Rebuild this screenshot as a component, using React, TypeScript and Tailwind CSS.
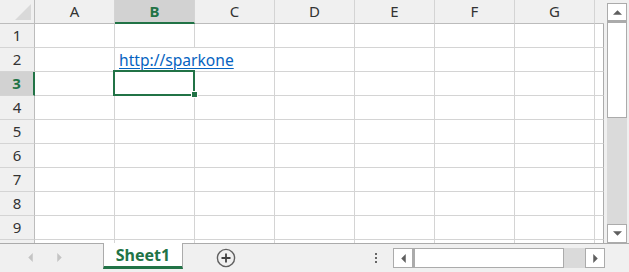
import React from "react"

const cols = ["A", "B", "C", "D", "E", "F", "G"]
const rows = [1, 2, 3, 4, 5, 6, 7, 8, 9]

const green = "#217346"

const Tri = ({ dir, color = "#5f5f5f" }: { dir: "up" | "down" | "left" | "right"; color?: string }) => {
  const pts = {
    up: "0,4 4,0 8,4",
    down: "0,0 8,0 4,4",
    left: "4,0 4,8 0,4",
    right: "0,0 0,8 4,4",
  }[dir]
  const horiz = dir === "left" || dir === "right"
  return (
    <svg width={horiz ? 5 : 9} height={horiz ? 9 : 5} viewBox={horiz ? "0 0 4 8" : "0 0 8 4"} className="block">
      <polygon points={pts} fill={color} />
    </svg>
  )
}

export default function App() {
  return (
    <div className="w-[629px] h-[272px] bg-[#f0f0f0] flex flex-col overflow-hidden font-['Noto_Sans',sans-serif] text-[#333]">
      <div className="flex h-[243px]">
        {/* sheet grid */}
        <div className="relative w-[607px] flex flex-col">
          <div className="flex h-[24px] shrink-0">
            <div className="w-[35px] h-[24px] border-r border-b border-[#bcbcbc]">
              <svg width="34" height="23" className="block">
                <polygon points="31,4 31,20 15,20" fill="#d9d9d9" />
              </svg>
            </div>
            {cols.map((c) =>
              c === "B" ? (
                <div
                  key={c}
                  className="w-[80px] h-[24px] border-r border-r-[#d4d4d4] border-b-2 border-b-[#217346] bg-[#d2d2d2] flex items-center justify-center text-[15px] font-bold text-[#217346]"
                >
                  {c}
                </div>
              ) : (
                <div
                  key={c}
                  className="w-[80px] h-[24px] border-r border-r-[#d4d4d4] border-b border-b-[#bcbcbc] flex items-center justify-center text-[15px]"
                >
                  {c}
                </div>
              )
            )}
            <div className="w-[9px] h-[24px] border-b border-[#bcbcbc]" />
          </div>

          {rows.map((r) => (
            <div key={r} className="flex h-[24px] shrink-0">
              {r === 3 ? (
                <div className="w-[35px] h-[24px] border-r-2 border-r-[#217346] border-b border-b-[#d4d4d4] bg-[#d2d2d2] flex items-center justify-center text-[15px] font-bold text-[#217346]">
                  {r}
                </div>
              ) : (
                <div className="w-[35px] h-[24px] border-r border-r-[#bcbcbc] border-b border-b-[#d4d4d4] flex items-center justify-center text-[15px]">
                  {r}
                </div>
              )}
              {cols.map((c) =>
                r === 2 && c === "B" ? (
                  <div key={c} className="w-[80px] h-[24px] bg-white border-b border-[#d4d4d4] flex items-end pl-[4px] pb-[1px]">
                    <span className="relative z-10 whitespace-nowrap text-[15.6px] leading-[20px] text-[#0563c1] underline underline-offset-2">
                      http://sparkone
                    </span>
                  </div>
                ) : (
                  <div key={c} className="w-[80px] h-[24px] bg-white border-r border-b border-[#d4d4d4]" />
                )
              )}
              <div className="w-[9px] h-[24px] bg-white border-r border-r-[#ababab] border-b border-b-[#d4d4d4]" />
            </div>
          ))}

          <div className="flex flex-1">
            <div className="w-[35px] border-r border-[#bcbcbc]" />
            {cols.map((c) => (
              <div key={c} className="w-[80px] bg-white border-r border-[#d4d4d4]" />
            ))}
            <div className="w-[9px] bg-white border-r border-[#ababab]" />
          </div>

          {/* selected cell B3 */}
          <div className="absolute left-[113px] top-[70px] w-[82px] h-[26px] border-2 border-[#217346]" />
          <div className="absolute left-[191px] top-[91px] w-[7px] h-[7px] bg-[#217346] border border-white" />
        </div>

        {/* vertical scrollbar */}
        <div className="w-[20px] flex flex-col pt-[3px]">
          <div className="h-[18px] bg-white border border-[#ababab] flex items-center justify-center">
            <Tri dir="up" />
          </div>
          <div className="h-[97px] bg-white border border-[#ababab] border-t-2" />
          <div className="flex-1 bg-[#dadada]" />
          <div className="h-[19px] bg-white border border-[#ababab] flex items-center justify-center">
            <Tri dir="down" />
          </div>
        </div>
      </div>

      {/* sheet tab bar */}
      <div className="flex-1 border-t border-[#ababab] flex">
        <div className="w-[103px] shrink-0 flex items-center pl-[28px] gap-[24px] pb-[2px]">
          <Tri dir="left" color="#c4c4c4" />
          <Tri dir="right" color="#c4c4c4" />
        </div>
        <div className="w-[80px] shrink-0 h-[26px] -mt-px bg-white border-x border-[#ababab] border-b-[3px] border-b-[#217346] flex items-center justify-center text-[16px] font-bold leading-none" style={{ color: green }}>
          Sheet1
        </div>
        <div className="w-[86px] shrink-0 flex items-center justify-center pb-[1px]">
          <svg width="20" height="20" viewBox="0 0 20 20" className="block">
            <circle cx="10" cy="10" r="8.6" fill="none" stroke="#606060" strokeWidth="1.4" />
            <path d="M10 5.5v9M5.5 10h9" stroke="#404040" strokeWidth="1.8" />
          </svg>
        </div>
        <div className="w-[124px] shrink-0 flex flex-col items-start justify-center gap-[2px] pl-[106px] pb-[1px]">
          <div className="w-[2px] h-[2px] bg-[#666]" />
          <div className="w-[2px] h-[2px] bg-[#666]" />
          <div className="w-[2px] h-[2px] bg-[#666]" />
        </div>
        <div className="flex shrink-0 h-[20px] mt-[4px]">
          <div className="w-[20px] h-[20px] bg-white border border-[#ababab] flex items-center justify-center">
            <Tri dir="left" />
          </div>
          <div className="w-[151px] h-[20px] bg-white border border-[#ababab] border-l-2" />
          <div className="w-[21px] h-[20px] bg-[#dadada]" />
          <div className="w-[20px] h-[20px] bg-white border border-[#ababab] flex items-center justify-center">
            <Tri dir="right" />
          </div>
        </div>
      </div>
    </div>
  )
}
